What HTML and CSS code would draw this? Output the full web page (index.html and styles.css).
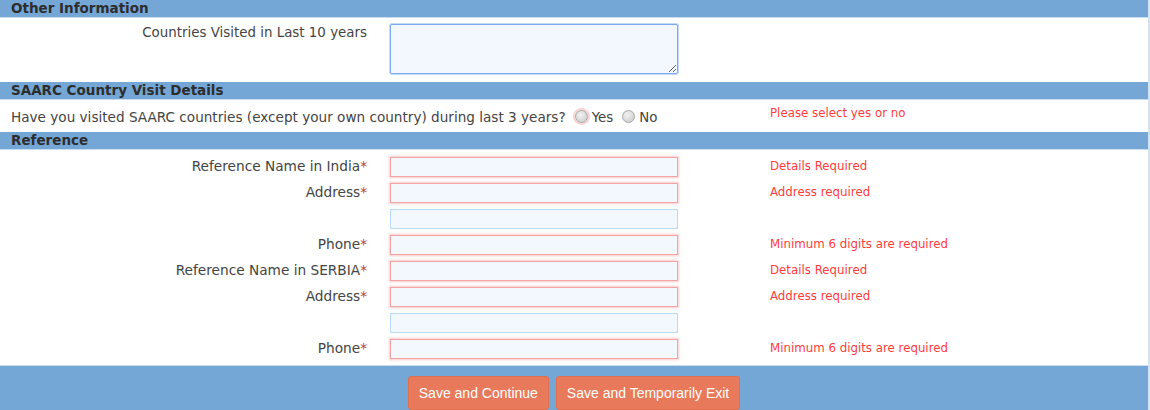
FILE: index.html
```html
<!DOCTYPE html>
<html>
<head>
<meta charset="utf-8">
<link rel="stylesheet" href="styles.css">
</head>
<body>
<div class="page">
  <div class="section-head">Other Information</div>
  <div class="grid area-row">
    <div class="label top">Countries Visited in Last 10 years</div>
    <div class="field"><textarea class="ta"></textarea></div>
    <div class="err"></div>
  </div>

  <div class="section-head">SAARC Country Visit Details</div>
  <div class="saarc-row">
    <div class="question">Have you visited SAARC countries (except your own country) during last 3 years?<span class="radio invalid"></span><span class="opt">Yes</span><span class="radio"></span><span class="opt">No</span></div>
    <div class="err">Please select yes or no</div>
  </div>

  <div class="section-head">Reference</div>
  <div class="grid ref">
    <div class="label">Reference Name in India<span class="req">*</span></div>
    <div class="field"><input class="inp bad"></div>
    <div class="err">Details Required</div>

    <div class="label">Address<span class="req">*</span></div>
    <div class="field"><input class="inp bad"></div>
    <div class="err">Address required</div>

    <div class="label"></div>
    <div class="field"><input class="inp"></div>
    <div class="err"></div>

    <div class="label">Phone<span class="req">*</span></div>
    <div class="field"><input class="inp bad"></div>
    <div class="err">Minimum 6 digits are required</div>

    <div class="label">Reference Name in SERBIA<span class="req">*</span></div>
    <div class="field"><input class="inp bad"></div>
    <div class="err">Details Required</div>

    <div class="label">Address<span class="req">*</span></div>
    <div class="field"><input class="inp bad"></div>
    <div class="err">Address required</div>

    <div class="label"></div>
    <div class="field"><input class="inp"></div>
    <div class="err"></div>

    <div class="label">Phone<span class="req">*</span></div>
    <div class="field"><input class="inp bad"></div>
    <div class="err">Minimum 6 digits are required</div>
  </div>

  <div class="footer">
    <button class="btn">Save and Continue</button>
    <button class="btn">Save and Temporarily Exit</button>
  </div>
</div>
</body>
</html>
```

FILE: styles.css
```css
html, body {
  margin: 0;
  padding: 0;
  background: #ffffff;
}
body {
  font-family: "DejaVu Sans", Verdana, sans-serif;
  font-size: 13.7px;
  color: #444;
}
.page {
  width: 1148px;
  border-right: 2px solid #d4e3f3;
  height: 410px;
  overflow: hidden;
}
.section-head {
  background: #74a7d5;
  color: #2d2d2d;
  font-weight: bold;
  font-size: 13.5px;
  height: 17px;
  line-height: 17px;
  padding-left: 11px;
  border-bottom: 1px solid #c9dcf0;
}
.grid {
  display: grid;
  grid-template-columns: 382px 388px 1fr;
}
.area-row {
  height: 64px;
  padding-top: 5px;
  box-sizing: border-box;
}
.label {
  text-align: right;
  padding-right: 15px;
  line-height: 20px;
  white-space: nowrap;
}
.area-row .label {
  font-size: 13.4px;
}
.area-row .field {
  padding-top: 1px;
}
.field {
  padding-left: 8px;
}
.ta {
  display: block;
  width: 288px;
  height: 50px;
  box-sizing: border-box;
  margin: 0;
  border: 1px solid #7aaaf0;
  box-shadow: 0 0 0 1px #c6dbf8;
  border-radius: 2px;
  background: #f3f8fe;
  resize: both;
}
.err {
  color: #ff3c3c;
  line-height: 20px;
  font-size: 11.8px;
}
.saarc-row {
  display: grid;
  grid-template-columns: 770px 1fr;
  height: 32px;
  padding-top: 7px;
  box-sizing: border-box;
}
.question {
  padding-left: 11px;
  line-height: 20px;
  white-space: nowrap;
  font-size: 13.6px;
}
.saarc-row .err {
  line-height: 15px;
  margin-top: -1px;
}
.question .radio {
  display: inline-block;
  width: 11px;
  height: 11px;
  border-radius: 50%;
  background: radial-gradient(circle at 40% 35%, #f2f2f2, #c8c8c8);
  border: 1px solid #a8a8a8;
  vertical-align: -1px;
  margin-left: 9px;
  margin-right: 4px;
}
.question .radio.invalid {
  box-shadow: 0 0 0 2px #fbd3d3;
}
.question .opt {
  font-size: 13.4px;
}
.ref {
  padding-top: 7px;
  grid-auto-rows: 26px;
  height: 208px;
  border-bottom: 1px solid #c9dcf0;
}
.ref .label, .ref .err {
  line-height: 18px;
}
.req {
  color: #c0392b;
}
.inp {
  display: block;
  width: 288px;
  height: 20px;
  box-sizing: border-box;
  margin: 0;
  border: 1px solid #b9d9f6;
  background: #f3f8fe;
  padding: 0;
}
.inp.bad {
  border-color: #f4a3a3;
  box-shadow: 0 0 2px 1px rgba(240, 110, 110, 0.35);
}
.footer {
  background: #74a7d5;
  height: 44px;
  display: flex;
  justify-content: center;
  gap: 7px;
  padding-top: 10px;
  box-sizing: border-box;
}
.btn {
  font-family: "Liberation Sans", Arial, sans-serif;
  font-size: 14px;
  color: #ffffff;
  background: #e8795a;
  border: 1px solid #e07050;
  border-radius: 3px;
  height: 34px;
  padding: 0 10px 1px;
  margin: 0;
}
```
